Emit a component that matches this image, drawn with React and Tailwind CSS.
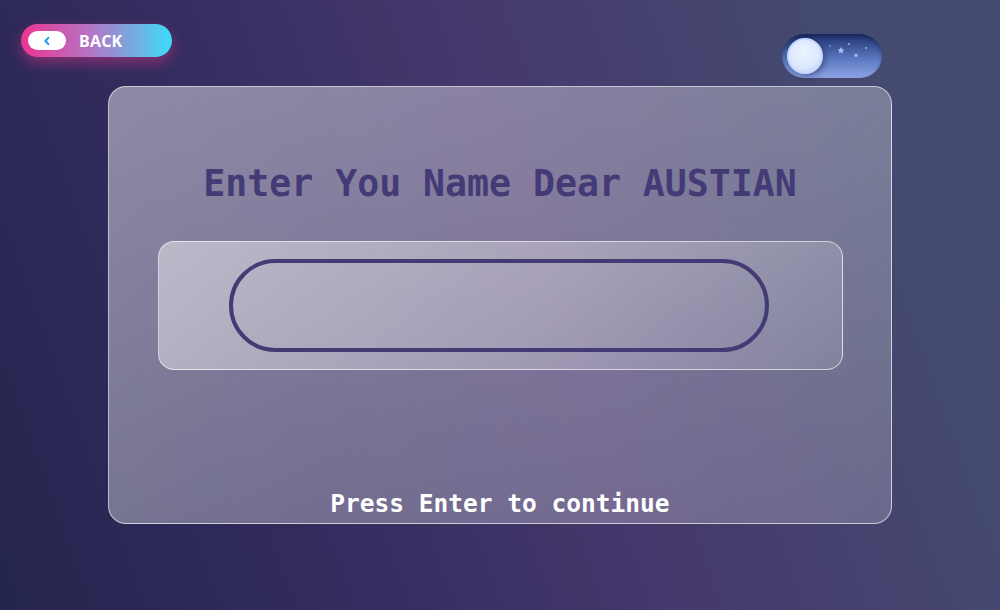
import React from "react";

export default function App() {
  return (
    <div className="w-[1000px] h-[610px] overflow-hidden bg-[linear-gradient(70deg,#24254e_0%,#342d5f_30%,#46386c_55%,#444a70_85%,#444c70_100%)] flex flex-col px-[21px] pt-[24px]" style={{ fontFamily: "'DejaVu Sans Mono', monospace" }}>
      <div className="flex items-start justify-between">
        <button className="w-[151px] h-[33px] rounded-full bg-[linear-gradient(90deg,#ea3590_0%,#b673c4_45%,#3ddcf9_100%)] shadow-[0_6px_14px_rgba(234,53,144,0.45)] flex items-center pl-[7px] gap-[13px]">
          <span className="w-[38px] h-[19px] rounded-full bg-white flex items-center justify-center">
            <svg width="10" height="10" viewBox="0 0 10 10"><path d="M6.3 1.8 L3.4 5 L6.3 8.2" fill="none" stroke="#1c9be8" strokeWidth="2" strokeLinecap="round" strokeLinejoin="round" /></svg>
          </span>
          <span className="text-white font-bold text-[16px] tracking-[0.2px]" style={{ fontFamily: "'Open Sans', sans-serif" }}>BACK</span>
        </button>
        <div className="mt-[10px] mr-[97px] w-[100px] h-[44px] rounded-full bg-[linear-gradient(180deg,#1f3170_0%,#5f7cc4_60%,#8ea5e6_100%)] relative shadow-[inset_0_2px_4px_rgba(0,0,0,0.3)] flex items-center pl-[5px]">
          <div className="w-[36px] h-[36px] rounded-full bg-[radial-gradient(circle_at_45%_40%,#eef5ff_0%,#dbe7ff_60%,#b7cbf5_100%)] shadow-[2px_2px_6px_rgba(10,20,60,0.45)] border-[2px] border-[#c8d8fb]" />
          <svg className="absolute left-[40px] top-[4px]" width="50" height="26" viewBox="0 0 50 26">
            <circle cx="27" cy="6" r="1" fill="#9fb3e6" />
            <circle cx="8" cy="8" r="0.8" fill="#9fb3e6" />
            <circle cx="44" cy="10" r="0.9" fill="#9fb3e6" />
            <path d="M19 9 l1.1 2.2 2.3 .3 -1.7 1.6 .4 2.3 -2.1 -1.1 -2.1 1.1 .4 -2.3 -1.7 -1.6 2.3 -.3z" fill="#a9bdf0" />
            <path d="M34 15 l.8 1.5 1.6 .2 -1.2 1.1 .3 1.6 -1.5 -.8 -1.5 .8 .3 -1.6 -1.2 -1.1 1.6 -.2z" fill="#a9bdf0" />
          </svg>
        </div>
      </div>
      <div className="ml-[87px] mt-[8px] w-[784px] h-[438px] rounded-[18px] border-[1.5px] border-white/60 bg-[linear-gradient(135deg,rgba(255,255,255,0.45)_0%,rgba(255,255,255,0.32)_50%,rgba(255,255,255,0.2)_100%)] flex flex-col items-center">
        <h1 className="mt-[75px] text-[36.5px] font-bold text-[#433a76] leading-[44px]">Enter You Name Dear AUSTIAN</h1>
        <div className="mt-[35px] w-[685px] h-[129px] rounded-[16px] border-[1.5px] border-white/60 bg-[linear-gradient(135deg,rgba(255,255,255,0.45)_0%,rgba(255,255,255,0.3)_55%,rgba(255,255,255,0.12)_100%)] flex items-center justify-center">
          <input className="w-[540px] h-[93px] rounded-full border-[4px] border-[#433b74] bg-transparent outline-none ml-[-2px]" />
        </div>
        <div className="mt-auto mb-[4px] text-white font-bold text-[24.5px] leading-[30px]">Press Enter to continue</div>
      </div>
    </div>
  );
}
